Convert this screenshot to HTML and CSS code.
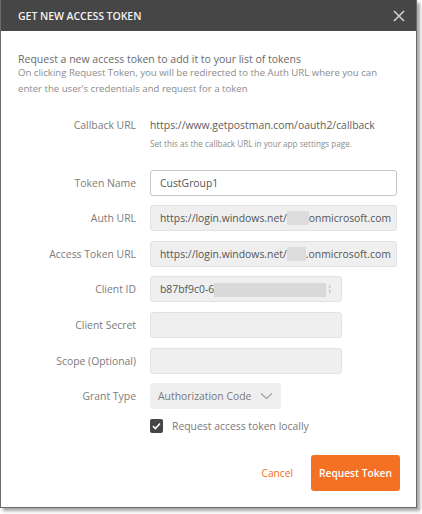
FILE: index.html
```html
<!DOCTYPE html>
<html>
<head>
<meta charset="utf-8">
<link rel="stylesheet" href="styles.css">
</head>
<body>
<div class="dialog">
  <div class="header">
    <span class="title">GET NEW ACCESS TOKEN</span>
    <svg class="close" width="12" height="12" viewBox="0 0 12 12"><path d="M1 1L11 11M11 1L1 11" stroke="#cfcfcf" stroke-width="1.6" fill="none"/></svg>
  </div>
  <div class="content">
    <p class="lead">Request a new access token to add it to your list of tokens</p>
    <p class="sub">On clicking Request Token, you will be redirected to the Auth URL where you can enter the user's credentials and request for a token</p>
    <div class="form">
      <div class="label cb">Callback URL</div>
      <div class="cbval">
        <div class="url">https://www.getpostman.com/oauth2/callback</div>
        <div class="hint">Set this as the callback URL in your app settings page.</div>
      </div>

      <div class="label">Token Name</div>
      <div class="field wide white">CustGroup1</div>

      <div class="label">Auth URL</div>
      <div class="field wide">https://login.windows.net/<span class="blur b1"></span>onmicrosoft.com</div>

      <div class="label">Access Token URL</div>
      <div class="field wide">https://login.windows.net/<span class="blur b2"></span>.onmicrosoft.com</div>

      <div class="label">Client ID</div>
      <div class="field mid">b87bf9c0-6<span class="blur b3"></span><span class="dots">⁞</span></div>

      <div class="label">Client Secret</div>
      <div class="field mid"></div>

      <div class="label">Scope (Optional)</div>
      <div class="field mid"></div>

      <div class="label">Grant Type</div>
      <div class="select">Authorization Code
        <svg class="chev" width="13" height="8" viewBox="0 0 13 8"><path d="M1 1.5L6.5 6.5L12 1.5" stroke="#a0a0a0" stroke-width="1.2" fill="none"/></svg>
      </div>

      <div></div>
      <label class="check">
        <span class="box"><svg width="9" height="8" viewBox="0 0 9 8"><path d="M1 4.2L3.4 6.5L8 1.5" stroke="#fff" stroke-width="1.6" fill="none"/></svg></span>
        Request access token locally
      </label>
    </div>
    <div class="actions">
      <button class="cancel">Cancel</button>
      <button class="primary">Request Token</button>
    </div>
  </div>
</div>
</body>
</html>
```
FILE: styles.css
```css
html, body {
  margin: 0;
  padding: 0;
  background: #ffffff;
}
body {
  font-family: "Open Sans", "Liberation Sans", sans-serif;
  width: 422px;
  height: 514px;
  overflow: hidden;
}
.dialog {
  width: 415px;
  height: 507px;
  background: #fff;
  border-left: 1px solid #6a6a6a;
  border-right: 1px solid #6a6a6a;
  border-bottom: 1px solid #6a6a6a;
  box-shadow: 3px 3px 3px rgba(0,0,0,0.35);
  display: flex;
  flex-direction: column;
}
.header {
  height: 31px;
  background: #464646;
  display: flex;
  align-items: center;
  justify-content: space-between;
  padding: 0 11px 0 17px;
}
.title {
  color: #f2f2f2;
  font-size: 10.6px;
  font-weight: 600;
  letter-spacing: -0.1px;
}
.close { margin-top: 1px; }
.content {
  padding: 20px 16px 0 17px;
  flex: 1;
}
.lead {
  margin: 0;
  font-size: 10.5px;
  color: #6a6a6a;
  line-height: 16px;
}
.sub {
  margin: -2px 0 0;
  font-size: 9.6px;
  color: #8c8c8c;
  line-height: 16px;
  padding-right: 4px;
}
.form {
  margin-top: 20px;
  display: grid;
  grid-template-columns: 118px 1fr;
  column-gap: 14px;
  row-gap: 9.6px;
  align-items: center;
  font-size: 10.4px;
}
.label {
  text-align: right;
  color: #7c7c7c;
}
.label.cb { align-self: start; padding-top: 1px; }
.cbval { margin-bottom: 10px; }
.url { color: #5e5e5e; line-height: 16px; }
.hint { color: #8c8c8c; font-size: 8.15px; line-height: 12px; margin-top: 5px; }
.field {
  height: 26px;
  box-sizing: border-box;
  border: 1px solid #e2e2e2;
  border-radius: 3px;
  background: #efefef;
  padding: 0 9px;
  line-height: 24px;
  white-space: nowrap;
  overflow: hidden;
  color: #555;
}
.field.white { background: #fff; border-color: #c6c6c6; }
.wide { width: 247px; }
.mid { width: 192px; }
.blur {
  display: inline-block;
  vertical-align: middle;
  height: 14px;
  margin-top: -2px;
  background: #dcdcdc;
}
.b1 { width: 22px; }
.b2 { width: 19px; }
.b3 { width: 112px; background: #d9d9d9; }
.dots { color: #aaa; margin-left: 2px; }
.select {
  width: 131px;
  height: 26px;
  box-sizing: border-box;
  background: #efefef;
  border-radius: 3px;
  padding: 0 8px;
  display: flex;
  align-items: center;
  justify-content: space-between;
  color: #7a7a7a;
}
.check {
  display: flex;
  align-items: center;
  gap: 9px;
  color: #7a7a7a;
}
.box {
  width: 13px;
  height: 14px;
  background: #464646;
  border-radius: 2px;
  display: flex;
  align-items: center;
  justify-content: center;
}
.actions {
  display: flex;
  justify-content: flex-end;
  align-items: center;
  gap: 18px;
  margin-top: 22px;
}
.cancel {
  background: none;
  border: none;
  font-family: inherit;
  font-size: 10.2px;
  color: #f26b23;
  padding: 0;
}
.primary {
  width: 89px;
  height: 36px;
  background: #f47023;
  border: none;
  border-radius: 3px;
  color: #fff;
  font-family: inherit;
  font-size: 10.2px;
  font-weight: 600;
  padding: 0;
}
```
